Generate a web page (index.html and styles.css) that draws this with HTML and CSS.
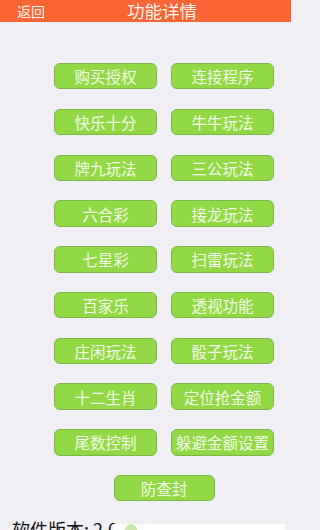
FILE: index.html
```html
<!DOCTYPE html>
<html lang="zh">
<head>
<meta charset="utf-8">
<title>功能详情</title>
<link rel="stylesheet" href="styles.css">
</head>
<body>
<header class="topbar">
  <span class="back">返回</span>
  <span class="title">功能详情</span>
</header>
<main class="grid">
  <div class="btn">购买授权</div>
  <div class="btn">连接程序</div>
  <div class="btn">快乐十分</div>
  <div class="btn">牛牛玩法</div>
  <div class="btn">牌九玩法</div>
  <div class="btn">三公玩法</div>
  <div class="btn">六合彩</div>
  <div class="btn">接龙玩法</div>
  <div class="btn">七星彩</div>
  <div class="btn">扫雷玩法</div>
  <div class="btn">百家乐</div>
  <div class="btn">透视功能</div>
  <div class="btn">庄闲玩法</div>
  <div class="btn">骰子玩法</div>
  <div class="btn">十二生肖</div>
  <div class="btn">定位抢金额</div>
  <div class="btn">尾数控制</div>
  <div class="btn">躲避金额设置</div>
  <div class="btn single">防查封</div>
</main>
<section class="version">
  <span class="vlabel">软件版本: 2.0</span>
  <div class="vbox"><span class="dot"></span></div>
</section>
</body>
</html>
```
FILE: styles.css
```css
html, body {
  margin: 0;
  padding: 0;
  background: #efeff4;
}
body {
  font-family: "Noto Sans CJK SC", "Noto Sans", sans-serif;
  width: 291px;
  height: 530px;
  overflow: hidden;
}
.topbar {
  height: 22px;
  background: #fb6434;
  display: flex;
  align-items: center;
  padding-left: 17px;
  color: #fff3ea;
  overflow: hidden;
}
.back {
  font-size: 14px;
  line-height: 20px;
  width: 28px;
  white-space: nowrap;
}
.title {
  margin-left: 82px;
  font-size: 17.5px;
  line-height: 20px;
  white-space: nowrap;
  margin-top: -1px;
}
.grid {
  display: grid;
  grid-template-columns: 103px 103px;
  column-gap: 14px;
  row-gap: 19.4px;
  padding-left: 54px;
  margin-top: 41px;
}
.btn {
  box-sizing: border-box;
  height: 26.4px;
  background: #91da45;
  border: 1px solid #7bb84a;
  border-radius: 6px;
  color: #f3fbe9;
  font-size: 15.5px;
  display: flex;
  align-items: center;
  justify-content: center;
  white-space: nowrap;
}
.btn.single {
  grid-column: 1 / span 2;
  justify-self: center;
  width: 101px;
}
.version {
  display: flex;
  align-items: flex-start;
  margin-top: 17px;
  padding-left: 12px;
}
.vlabel {
  font-size: 18px;
  line-height: 22px;
  color: #111;
  width: 101px;
  white-space: nowrap;
}
.vbox {
  margin-top: 6px;
  width: 172px;
  height: 20px;
  background: #ffffff;
  position: relative;
}
.dot {
  position: absolute;
  left: 12px;
  top: 0;
  width: 12px;
  height: 6px;
  border-radius: 6px 6px 0 0;
  background: #c9e7a6;
}
```
